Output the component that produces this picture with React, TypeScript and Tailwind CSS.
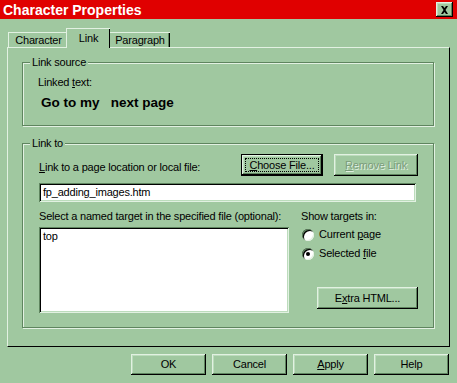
import type { ReactNode } from "react";

const raised =
  "shadow-[inset_-1px_-1px_0_#000,inset_1px_1px_0_#e2f1e2,inset_-2px_-2px_0_#5f855f,inset_2px_2px_0_#bcdcbc]";
const sunken =
  "shadow-[inset_1px_1px_0_#5f855f,inset_-1px_-1px_0_#e2f1e2,inset_2px_2px_0_#000,inset_-2px_-2px_0_#bcdcbc]";

function Key({ children }: { children: ReactNode }) {
  return <span className="underline underline-offset-[1px]">{children}</span>;
}

function Button({
  children,
  className = "",
  disabled = false,
  focused = false,
}: {
  children: ReactNode;
  className?: string;
  disabled?: boolean;
  focused?: boolean;
}) {
  if (focused) {
    return (
      <div className={`border border-black bg-[#a0c8a0] ${className}`}>
        <div className={`flex h-full w-full p-[3px] ${raised}`}>
          <span className="flex flex-1 items-center justify-center border border-dotted border-black">
            {children}
          </span>
        </div>
      </div>
    );
  }
  return (
    <div
      className={`flex items-center justify-center bg-[#a0c8a0] ${raised} ${className} ${
        disabled ? "text-[#7a9c7a] [text-shadow:1px_1px_0_#e2f1e2]" : ""
      }`}
    >
      {children}
    </div>
  );
}

function Group({
  title,
  className = "",
  children,
}: {
  title: ReactNode;
  className?: string;
  children: ReactNode;
}) {
  return (
    <div
      className={`relative border border-[#5f855f] shadow-[1px_1px_0_#e2f1e2,inset_1px_1px_0_#e2f1e2] ${className}`}
    >
      <span className="absolute -top-[8px] left-[7px] bg-[#a0c8a0] px-[2px] leading-[14px]">
        {title}
      </span>
      {children}
    </div>
  );
}

function Radio({ label, checked }: { label: ReactNode; checked?: boolean }) {
  return (
    <div className="flex h-[19px] items-center gap-[5px]">
      <span className="relative flex h-[12px] w-[12px] items-center justify-center rounded-full bg-white shadow-[inset_1px_1px_0_#5f855f,inset_-1px_-1px_0_#e2f1e2,inset_2px_2px_0_#000]">
        {checked && <span className="h-[4px] w-[4px] rounded-full bg-black" />}
      </span>
      <span>{label}</span>
    </div>
  );
}

export default function App() {
  return (
    <div className="h-[383px] w-[457px] overflow-hidden bg-[#a0c8a0] font-['Liberation_Sans',Arial,sans-serif] text-[11px] leading-[13px] tracking-[-0.2px] text-black">
      <div className="flex h-[19px] items-center justify-between bg-[#e00000] pl-[3px] pr-[4px]">
        <span className="text-[14px] font-bold leading-[16px] tracking-normal text-white">
          Character Properties
        </span>
        <div className={`flex h-[15px] w-[17px] items-center justify-center bg-[#a0c8a0] ${raised}`}>
          <svg width="9" height="8" viewBox="0 0 9 8">
            <path d="M1 0h2l1.5 2 1.5-2h2L5.5 4 8 8H6L4.5 6 3 8H1l2.5-4z" fill="#000" />
          </svg>
        </div>
      </div>

      <div className="ml-[8px] mt-[9px] flex h-[19px] items-end">
        <div className="flex h-[15px] w-[58px] items-center justify-center border-l border-t border-[#e2f1e2] pl-[2px] pt-[1px]">
          Character
        </div>
        <div className="relative z-10 -mb-[1px] flex h-[20px] w-[44px] items-start justify-center border-l border-t border-[#e2f1e2] bg-[#a0c8a0] pt-[3px] shadow-[inset_-1px_0_0_#000]">
          Link
        </div>
        <div className="flex h-[15px] w-[60px] items-center justify-center border-t border-[#e2f1e2] pt-[1px] shadow-[inset_-1px_0_0_#000,inset_-2px_0_0_#5f855f]">
          Paragraph
        </div>
      </div>

      <div className="ml-[7px] h-[300px] w-[443px] border-b border-l border-r border-t border-b-black border-l-[#e2f1e2] border-r-black border-t-[#e2f1e2] pl-[14px] pt-[14px]">
        <Group title="Link source" className="h-[64px] w-[412px]">
          <div className="pl-[15px] pt-[13px]">
            <div>
              Linked <Key>t</Key>ext:
            </div>
            <div className="ml-[3px] mt-[7px] whitespace-pre text-[13.5px] font-bold leading-[14px] tracking-normal">
              {"Go to my   next page"}
            </div>
          </div>
        </Group>

        <Group title="Link to" className="mt-[17px] h-[185px] w-[412px]">
          <div className="pl-[16px] pt-[10px]">
            <div className="flex w-[379px] items-end justify-between">
              <span className="pb-[2px]">
                <Key>L</Key>ink to a page location or local file:
              </span>
              <div className="flex gap-[11px]">
                <Button focused className="h-[22px] w-[82px]">
                  <Key>C</Key>hoose File...
                </Button>
                <Button disabled className="h-[22px] w-[84px]">
                  <Key>R</Key>emove Link
                </Button>
              </div>
            </div>

            <div className={`mt-[7px] flex h-[19px] w-[377px] items-center bg-white pl-[4px] ${sunken}`}>
              fp_adding_images.htm
            </div>

            <div className="mt-[8px] flex">
              <div className="w-[262px]">
                <div>Select a named target in the specified file (optional):</div>
                <div className={`mt-[4px] h-[86px] w-[250px] bg-white pl-[4px] pt-[3px] ${sunken}`}>
                  top
                </div>
              </div>
              <div>
                <div>Show targets in:</div>
                <div className="ml-[1px] mt-[2px]">
                  <Radio
                    label={
                      <>
                        Current <Key>p</Key>age
                      </>
                    }
                  />
                  <Radio
                    checked
                    label={
                      <>
                        Selected <Key>f</Key>ile
                      </>
                    }
                  />
                </div>
                <Button className="ml-[16px] mt-[24px] h-[22px] w-[101px]">
                  E<Key>x</Key>tra HTML...
                </Button>
              </div>
            </div>
          </div>
        </Group>
      </div>

      <div className="mt-[7px] flex justify-end gap-[6px] pr-[8px]">
        <Button className="h-[21px] w-[75px]">OK</Button>
        <Button className="h-[21px] w-[75px]">Cancel</Button>
        <Button className="h-[21px] w-[75px]">
          <Key>A</Key>pply
        </Button>
        <Button className="h-[21px] w-[75px]">Help</Button>
      </div>
    </div>
  );
}
